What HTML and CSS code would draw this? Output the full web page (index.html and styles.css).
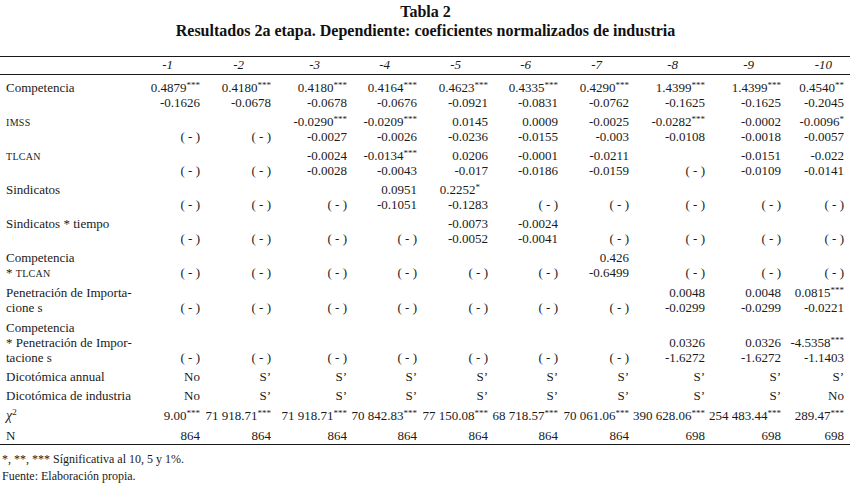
FILE: index.html
```html
<!DOCTYPE html>
<html lang="es">
<head>
<meta charset="utf-8">
<title>Tabla 2</title>
<link rel="stylesheet" href="styles.css">
</head>
<body>
<div class="page">
  <h1 class="title">Tabla 2<br>Resultados 2a etapa. Dependiente: coeficientes normalizados de industria</h1>
  <table class="t">
    <colgroup>
      <col class="c-label"><col class="c74"><col class="c71"><col class="c76"><col class="c70"><col class="c71"><col class="c70"><col class="c71"><col class="c76"><col class="c76"><col class="c65">
    </colgroup>
    <thead>
      <tr class="head">
        <th></th><th>-1</th><th>-2</th><th>-3</th><th>-4</th><th>-5</th><th>-6</th><th>-7</th><th>-8</th><th>-9</th><th class="last">-10</th>
      </tr>
    </thead>
    <tbody>
      <tr>
        <td class="lab">Competencia</td>
        <td>0.4879<sup>***</sup><br>-0.1626</td>
        <td>0.4180<sup>***</sup><br>-0.0678</td>
        <td>0.4180<sup>***</sup><br>-0.0678</td>
        <td>0.4164<sup>***</sup><br>-0.0676</td>
        <td>0.4623<sup>***</sup><br>-0.0921</td>
        <td>0.4335<sup>***</sup><br>-0.0831</td>
        <td>0.4290<sup>***</sup><br>-0.0762</td>
        <td>1.4399<sup>***</sup><br>-0.1625</td>
        <td>1.4399<sup>***</sup><br>-0.1625</td>
        <td>0.4540<sup>**</sup><br>-0.2045</td>
      </tr>
      <tr>
        <td class="lab"><span class="sc">IMSS</span></td>
        <td>&nbsp;<br>( - )</td>
        <td>&nbsp;<br>( - )</td>
        <td>-0.0290<sup>***</sup><br>-0.0027</td>
        <td>-0.0209<sup>***</sup><br>-0.0026</td>
        <td>0.0145<br>-0.0236</td>
        <td>0.0009<br>-0.0155</td>
        <td>-0.0025<br>-0.003</td>
        <td>-0.0282<sup>***</sup><br>-0.0108</td>
        <td>-0.0002<br>-0.0018</td>
        <td>-0.0096<sup>*</sup><br>-0.0057</td>
      </tr>
      <tr>
        <td class="lab"><span class="sc">TLCAN</span></td>
        <td>&nbsp;<br>( - )</td>
        <td>&nbsp;<br>( - )</td>
        <td>-0.0024<br>-0.0028</td>
        <td>-0.0134<sup>***</sup><br>-0.0043</td>
        <td>0.0206<br>-0.017</td>
        <td>-0.0001<br>-0.0186</td>
        <td>-0.0211<br>-0.0159</td>
        <td>&nbsp;<br>( - )</td>
        <td>-0.0151<br>-0.0109</td>
        <td>-0.022<br>-0.0141</td>
      </tr>
      <tr>
        <td class="lab">Sindicatos</td>
        <td>&nbsp;<br>( - )</td>
        <td>&nbsp;<br>( - )</td>
        <td>&nbsp;<br>( - )</td>
        <td>0.0951<br>-0.1051</td>
        <td><span class="shift">0.2252<sup>*</sup></span><br>-0.1283</td>
        <td>&nbsp;<br>( - )</td>
        <td>&nbsp;<br>( - )</td>
        <td>&nbsp;<br>( - )</td>
        <td>&nbsp;<br>( - )</td>
        <td>&nbsp;<br>( - )</td>
      </tr>
      <tr>
        <td class="lab">Sindicatos * tiempo</td>
        <td>&nbsp;<br>( - )</td>
        <td>&nbsp;<br>( - )</td>
        <td>&nbsp;<br>( - )</td>
        <td>&nbsp;<br>( - )</td>
        <td>-0.0073<br>-0.0052</td>
        <td>-0.0024<br>-0.0041</td>
        <td>&nbsp;<br>( - )</td>
        <td>&nbsp;<br>( - )</td>
        <td>&nbsp;<br>( - )</td>
        <td>&nbsp;<br>( - )</td>
      </tr>
      <tr>
        <td class="lab">Competencia<br>* <span class="sc">TLCAN</span></td>
        <td>&nbsp;<br>( - )</td>
        <td>&nbsp;<br>( - )</td>
        <td>&nbsp;<br>( - )</td>
        <td>&nbsp;<br>( - )</td>
        <td>&nbsp;<br>( - )</td>
        <td>&nbsp;<br>( - )</td>
        <td>0.426<br>-0.6499</td>
        <td>&nbsp;<br>( - )</td>
        <td>&nbsp;<br>( - )</td>
        <td>&nbsp;<br>( - )</td>
      </tr>
      <tr>
        <td class="lab">Penetración de Importa-<br>cione s</td>
        <td>&nbsp;<br>( - )</td>
        <td>&nbsp;<br>( - )</td>
        <td>&nbsp;<br>( - )</td>
        <td>&nbsp;<br>( - )</td>
        <td>&nbsp;<br>( - )</td>
        <td>&nbsp;<br>( - )</td>
        <td>&nbsp;<br>( - )</td>
        <td>0.0048<br>-0.0299</td>
        <td>0.0048<br>-0.0299</td>
        <td>0.0815<sup>***</sup><br>-0.0221</td>
      </tr>
      <tr>
        <td class="lab">Competencia<br>* Penetración de Impor-<br>tacione s</td>
        <td>&nbsp;<br>&nbsp;<br>( - )</td>
        <td>&nbsp;<br>&nbsp;<br>( - )</td>
        <td>&nbsp;<br>&nbsp;<br>( - )</td>
        <td>&nbsp;<br>&nbsp;<br>( - )</td>
        <td>&nbsp;<br>&nbsp;<br>( - )</td>
        <td>&nbsp;<br>&nbsp;<br>( - )</td>
        <td>&nbsp;<br>&nbsp;<br>( - )</td>
        <td>&nbsp;<br>0.0326<br>-1.6272</td>
        <td>&nbsp;<br>0.0326<br>-1.6272</td>
        <td>&nbsp;<br>-4.5358<sup>***</sup><br>-1.1403</td>
      </tr>
      <tr class="single">
        <td class="lab">Dicotómica annual</td>
        <td>No</td><td>S’</td><td>S’</td><td>S’</td><td>S’</td><td>S’</td><td>S’</td><td>S’</td><td>S’</td><td>S’</td>
      </tr>
      <tr class="single">
        <td class="lab">Dicotómica de industria</td>
        <td>No</td><td>S’</td><td>S’</td><td>S’</td><td>S’</td><td>S’</td><td>S’</td><td>S’</td><td>S’</td><td>No</td>
      </tr>
      <tr class="single">
        <td class="lab"><i class="chi">χ</i><sup class="sq">2</sup></td>
        <td>9.00<sup>***</sup></td>
        <td>71 918.71<sup>***</sup></td>
        <td>71 918.71<sup>***</sup></td>
        <td>70 842.83<sup>***</sup></td>
        <td>77 150.08<sup>***</sup></td>
        <td>68 718.57<sup>***</sup></td>
        <td>70 061.06<sup>***</sup></td>
        <td>390 628.06<sup>***</sup></td>
        <td>254 483.44<sup>***</sup></td>
        <td>289.47<sup>***</sup></td>
      </tr>
      <tr class="single lastrow">
        <td class="lab">N</td>
        <td>864</td><td>864</td><td>864</td><td>864</td><td>864</td><td>864</td><td>864</td><td>698</td><td>698</td><td>698</td>
      </tr>
    </tbody>
  </table>
  <div class="notes">
    <p>*, **, *** Sígnificativa al 10, 5 y 1%.</p>
    <p>Fuente: Elaboración propia.</p>
  </div>
</div>
</body>
</html>
```

FILE: styles.css
```css
html, body {
  margin: 0;
  padding: 0;
  background: #ffffff;
}

body {
  font-family: "Liberation Serif", "Times New Roman", serif;
  color: #1a1a1a;
}

.page {
  width: 851px;
}

.title {
  margin: 2px 0 0 0;
  font-size: 16px;
  line-height: 19px;
  font-weight: bold;
  text-align: center;
  color: #111;
}

.t {
  margin-top: 16px;
  width: 850px;
  table-layout: fixed;
  border-collapse: collapse;
  font-size: 13px;
  line-height: 15px;
}

.c-label { width: 130px; }
.c74 { width: 74px; }
.c71 { width: 71px; }
.c76 { width: 76px; }
.c70 { width: 70px; }
.c65 { width: 65px; }

.head th {
  border-top: 1px solid #1a1a1a;
  border-bottom: 1px solid #1a1a1a;
  font-weight: normal;
  font-style: italic;
  text-align: right;
  padding: 0 31px 2px 0;
}

.head th.last {
  padding-right: 18px;
}

.t td {
  text-align: right;
  vertical-align: top;
  padding: 2.9px 4px 1.2px 0;
  white-space: nowrap;
}

.t td:last-child {
  padding-right: 6px;
}

.t td.lab {
  text-align: left;
  padding-left: 6px;
}

.t tbody tr:first-child td {
  padding-top: 5px;
}

.t .single td {
  padding-top: 3px;
  padding-bottom: 1.6px;
}

.lastrow td {
  border-bottom: 1.5px solid #1a1a1a;
}

.sc {
  font-size: 10px;
  letter-spacing: 0.3px;
}

sup {
  font-size: 9px;
  line-height: 0;
  vertical-align: 4px;
}

.shift {
  padding-right: 8px;
}

.chi {
  font-size: 14px;
}

.sq {
  font-size: 9px;
  vertical-align: 5px;
}

.notes {
  margin-top: 6px;
  padding-left: 2px;
  font-size: 12px;
  line-height: 17px;
}

.notes p {
  margin: 0;
}
```
